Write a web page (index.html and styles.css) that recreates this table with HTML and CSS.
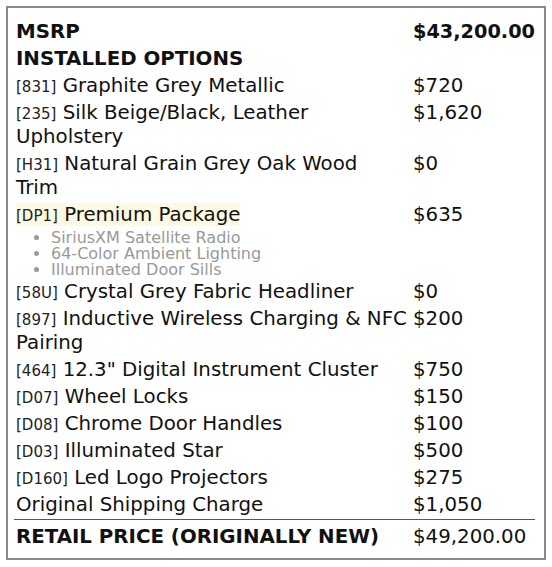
FILE: index.html
```html
<!DOCTYPE html>
<html>
<head>
<meta charset="utf-8">
<link rel="stylesheet" href="styles.css">
</head>
<body>
<div class="card">
  <table class="sticker">
    <colgroup><col class="c-label"><col class="c-price"></colgroup>
    <tbody>
      <tr class="head"><td>MSRP</td><td>$43,200.00</td></tr>
      <tr class="head"><td>INSTALLED OPTIONS</td><td></td></tr>
      <tr><td><span class="code">[831]</span> Graphite Grey Metallic</td><td>$720</td></tr>
      <tr><td><span class="code">[235]</span> Silk Beige/Black, Leather Upholstery</td><td>$1,620</td></tr>
      <tr><td><span class="code">[H31]</span> Natural Grain Grey Oak Wood<br>Trim</td><td>$0</td></tr>
      <tr class="pkg">
        <td><span class="hl"><span class="code">[DP1]</span> Premium Package</span>
          <ul class="features">
            <li>SiriusXM Satellite Radio</li>
            <li>64-Color Ambient Lighting</li>
            <li>Illuminated Door Sills</li>
          </ul>
        </td>
        <td>$635</td>
      </tr>
      <tr><td><span class="code">[58U]</span> Crystal Grey Fabric Headliner</td><td>$0</td></tr>
      <tr><td><span class="code">[897]</span> Inductive Wireless Charging &amp; NFC Pairing</td><td>$200</td></tr>
      <tr><td><span class="code">[464]</span> 12.3" Digital Instrument Cluster</td><td>$750</td></tr>
      <tr><td><span class="code">[D07]</span> Wheel Locks</td><td>$150</td></tr>
      <tr><td><span class="code">[D08]</span> Chrome Door Handles</td><td>$100</td></tr>
      <tr><td><span class="code">[D03]</span> Illuminated Star</td><td>$500</td></tr>
      <tr><td><span class="code">[D160]</span> Led Logo Projectors</td><td>$275</td></tr>
      <tr><td>Original Shipping Charge</td><td>$1,050</td></tr>
      <tr class="total"><td>RETAIL PRICE (ORIGINALLY NEW)</td><td>$49,200.00</td></tr>
    </tbody>
  </table>
</div>
</body>
</html>
```
FILE: styles.css
```css
html { background: #fff; }
body {
  margin: 6px;
  font-family: "DejaVu Sans", sans-serif;
  color: #111;
}
.card {
  border: 2px solid #8a8a8a;
  padding: 10px 9px 7.5px 6px;
}
.sticker {
  width: 100%;
  border-collapse: collapse;
  table-layout: fixed;
  font-size: 19.8px;
  line-height: 24px;
}
.c-label { width: 397px; }
.sticker td {
  padding: 1.5px 2px;
  vertical-align: top;
}
.sticker td:first-child { padding-right: 4px; }
.head td { font-weight: bold; }
.head td:last-child { font-size: 19.3px; }
.code {
  font-size: 15px;
  line-height: 1;
  color: #222;
}
.hl { background: #fdf9e2; }
.pkg td { padding-bottom: 0.5px; }
.features {
  margin: 3.5px 0 0 0;
  padding-left: 35px;
  font-size: 16px;
  line-height: 16px;
  color: #999;
}
.total td {
  border-top: 1px solid #555;
  padding-top: 5px;
}
.total td:first-child { font-weight: bold; }
```
